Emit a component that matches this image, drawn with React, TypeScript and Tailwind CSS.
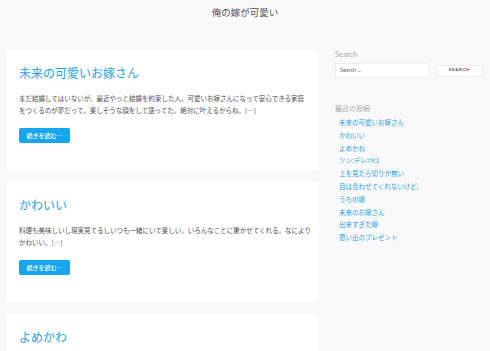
import React from "react";

const jp = { fontFamily: '"Noto Sans CJK JP", "Noto Sans", sans-serif' };
const lat = { fontFamily: 'Lato, "Noto Sans CJK JP", sans-serif' };

const posts = [
  {
    title: "未来の可愛いお嫁さん",
    l1: "まだ結婚してはいないが、最近やっと結婚を約束した人。可愛いお嫁さんになって安心できる家庭",
    l2: "をつくるのが夢だって、楽しそうな顔をして語ってた。絶対に叶えるからね。[…]",
  },
  {
    title: "かわいい",
    l1: "料理も美味しいし現実見てるしいつも一緒にいて楽しい。いろんなことに驚かせてくれる。なにより",
    l2: "かわいい。[…]",
  },
];

const recent = [
  "未来の可愛いお嫁さん",
  "かわいい",
  "よめかわ",
  "ツン:デレ=9:1",
  "上を見たら切りが無い",
  "目は合わせてくれないけど。",
  "うちの嫁",
  "未来のお嫁さん",
  "出来すぎた嫁",
  "思い出のプレゼント",
];

export default function App() {
  return (
    <div className="w-[490px] h-[351px] overflow-hidden bg-[#f9f9f9]" style={jp}>
      <header className="h-[50px] flex justify-center">
        <div className="text-[9.5px] leading-[14px] pt-[5px] text-[#555]">俺の嫁が可愛い</div>
      </header>
      <div className="flex px-[7px] gap-[16px]">
        <main className="w-[312px] flex flex-col gap-[12px]">
          {posts.map((p) => (
            <article key={p.title} className="bg-white pt-[15px] px-[12px] h-[120px]">
              <h2 className="text-[12px] leading-[15px] text-[#27a3e6] font-normal">{p.title}</h2>
              <p className="mt-[11.5px] text-[6.5px] leading-[12px] text-[#505050] whitespace-nowrap">
                {p.l1}
                <br />
                {p.l2}
              </p>
              <button className="mt-[12px] h-[15px] w-[51px] rounded-[2px] bg-[#16a6ee] text-white text-[6px] leading-[15px] font-medium flex items-center justify-center">
                続きを読む…
              </button>
            </article>
          ))}
          <article className="bg-white pt-[15px] px-[12px] h-[120px]">
            <h2 className="text-[12px] leading-[15px] text-[#27a3e6] font-normal">よめかわ</h2>
          </article>
        </main>
        <aside className="w-[148px] flex flex-col">
          <div className="text-[7.5px] leading-[10px] text-[#aaa]" style={lat}>Search</div>
          <div className="flex items-center justify-between mt-[3px]">
            <div className="w-[95px] h-[15px] bg-white border border-[#eee] rounded-[2px] flex items-center pl-[4px] text-[5.5px] text-[#666]" style={lat}>
              Search …
            </div>
            <div className="w-[47px] h-[12px] bg-white border border-[#eee] rounded-[1px] flex items-center justify-center text-[4.5px] font-bold tracking-[0.15em] text-[#555]" style={lat}>
              SEARCH
            </div>
          </div>
          <div className="mt-[25px] text-[7px] leading-[10px] text-[#aaa]">最近の投稿</div>
          <ul className="mt-[3px] pl-[4px] flex flex-col">
            {recent.map((r) => (
              <li key={r} className="text-[6.5px] leading-[12.8px] text-[#27a3e6]">{r}</li>
            ))}
          </ul>
        </aside>
      </div>
    </div>
  );
}
